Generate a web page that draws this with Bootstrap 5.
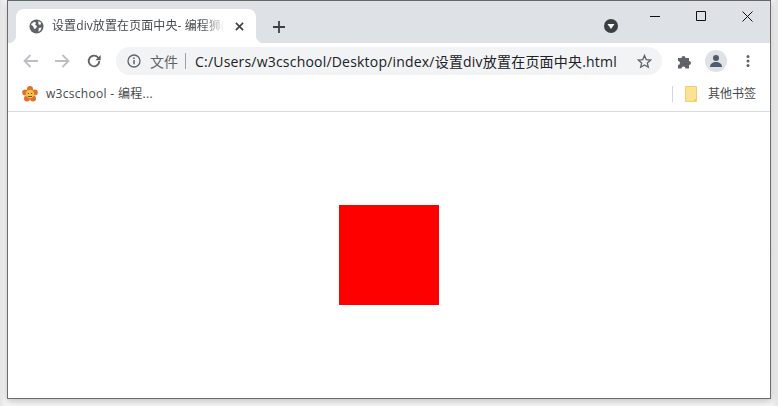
<!DOCTYPE html>
<html lang="zh-CN">
<head>
    <meta charset="UTF-8">
    <title>设置div放置在页面中央</title>
    <link href="https://cdn.jsdelivr.net/npm/bootstrap@5.3.3/dist/css/bootstrap.min.css" rel="stylesheet">
    <style>
        html, body { height: 100%; background: #fff; overflow: hidden; }
        body { font-family: "Open Sans", "Noto Sans CJK SC", sans-serif; }
        .shot { width: 778px; height: 406px; padding: 0 7px 7px 7px; background: linear-gradient(90deg, #e4e4e4, #f6f6f6 5px, #f6f6f6 771px, #e4e4e4); }
        .win { height: 399px; border: 1px solid #6b6b6b; border-top-color: #666; background: #fff; box-shadow: 0 2px 7px rgba(0,0,0,.22); }
        .titlebar { height: 42px; background: #dee1e6; padding: 8px 0 0 8px; }
        .tab-item { position: relative; width: 240px; height: 34px; background: #fff; border-radius: 8px 8px 0 0; padding: 0 12px 0 13px; font-size: 12px; color: #45484c; }
        .tab-item::before, .tab-item::after { content: ""; position: absolute; bottom: 0; width: 8px; height: 8px; background: radial-gradient(circle at 0 0, transparent 8px, #fff 8.5px); }
        .tab-item::before { left: -8px; }
        .tab-item::after { right: -8px; background: radial-gradient(circle at 100% 0, transparent 8px, #fff 8.5px); }
        .tab-text { margin-left: 8px; letter-spacing: .1px; white-space: nowrap; -webkit-mask-image: linear-gradient(90deg, #000 150px, transparent 173px); mask-image: linear-gradient(90deg, #000 150px, transparent 173px); }
        .newtab { margin-left: 17px; margin-top: 12px; }
        .media-btn { margin-left: 319px; margin-top: 10px; }
        .winctl { width: 46px; height: 30px; margin-top: -8px; }
        .winctls { margin-left: 14px; }
        .toolbar { height: 36px; padding-left: 15px; }
        .nav-gap { margin-right: 16px; }
        .back-gap { margin-right: 15px; }
        .reload { margin-right: 8px; margin-left: 1px; }
        .omni { width: 546px; height: 28px; margin-left: 7px; background: #f1f3f4; border-radius: 14px; padding: 0 11px; font-size: 14px; color: #202124; white-space: nowrap; }
        .omni-file { margin-left: 9px; font-size: 14px; color: #5f6368; }
        .omni-sep { width: 1px; height: 16px; background: #9aa0a6; margin: 0 9px 0 7px; }
        .omni-url { letter-spacing: .2px; }
        .star { margin-left: auto; margin-right: -1px; }
        .ext { margin-left: 15px; }
        .avatar { width: 22px; height: 22px; margin-left: 12px; border-radius: 50%; background: #dee1e6; }
        .dots { margin-left: 19px; }
        .bookmarks { height: 33px; padding: 0 14px 3px 14px; border-bottom: 1px solid #d9dadc; font-size: 12px; color: #45484c; }
        .bm-first { margin-left: 8px; letter-spacing: .3px; }
        .bm-sep { width: 1px; height: 16px; background: #d3d5d8; margin-right: 12px; }
        .bm-other { margin-left: 11px; }
        .page-area { height: 286px; }
        .redbox { width: 100px; height: 100px; background: #f00; }
        svg { display: block; flex-shrink: 0; }
    </style>
</head>
<body>
<div class="shot">
    <div class="win">
        <!-- title bar -->
        <div class="titlebar d-flex align-items-start">
            <div class="tab-item d-flex align-items-center">
                <svg width="15" height="15" viewBox="0 0 16 16"><circle cx="8" cy="8" r="7.5" fill="#5f6368"/><path d="M2 5.5 5.5 3l2 1-1 2 2 1.5-1 2.5-2 .5-1-2.500zM10 2l3 2-1 2.500-2-1zM10.500 9.500l3-.5-1.500 3.500-2 1z" fill="#fff"/></svg>
                <span class="tab-text">设置div放置在页面中央- 编程狮(</span>
                <svg class="ms-auto" width="9" height="9" viewBox="0 0 10 10"><path d="M1 1l8 8M9 1l-8 8" stroke="#3c4043" stroke-width="1.800"/></svg>
            </div>
            <svg class="newtab" width="12" height="12" viewBox="0 0 12 12"><path d="M6 0v12M0 6h12" stroke="#3c4043" stroke-width="1.800"/></svg>
            <svg class="media-btn" width="14" height="14" viewBox="0 0 14 14"><circle cx="7" cy="7" r="7" fill="#3c4043"/><path d="M3.500 5h7L7 10z" fill="#fff"/></svg>
            <div class="winctls d-flex">
                <div class="winctl d-flex align-items-center justify-content-center"><svg width="10" height="1" viewBox="0 0 10 1"><path d="M0 .5h10" stroke="#111"/></svg></div>
                <div class="winctl d-flex align-items-center justify-content-center"><svg width="10" height="10" viewBox="0 0 10 10"><path d="M.5.5h9v9h-9z" fill="none" stroke="#111"/></svg></div>
                <div class="winctl d-flex align-items-center justify-content-center"><svg width="11" height="11" viewBox="0 0 11 11"><path d="M.5.5l10 10M10.500.5l-10 10" stroke="#111"/></svg></div>
            </div>
        </div>

        <!-- toolbar -->
        <div class="toolbar d-flex align-items-center">
            <svg class="back-gap" width="16" height="14" viewBox="0 0 16 14"><path d="M15 7H2M7.500 1 1.500 7l6 6" fill="none" stroke="#bcbfc3" stroke-width="1.800"/></svg>
            <svg class="nav-gap" width="16" height="14" viewBox="0 0 16 14"><path d="M1 7h13M8.500 1l6 6-6 6" fill="none" stroke="#bcbfc3" stroke-width="1.800"/></svg>
            <svg class="reload" width="14" height="14" viewBox="0 0 14 14"><path d="M11.500 4.200A5.300 5.300 0 1 0 12.300 7" fill="none" stroke="#5f6368" stroke-width="1.800"/><path d="M13.700 1v5.300h-5.300z" fill="#5f6368"/></svg>
            <div class="omni d-flex align-items-center">
                <svg width="14" height="14" viewBox="0 0 14 14"><circle cx="7" cy="7" r="6" fill="none" stroke="#5f6368" stroke-width="1.300"/><path d="M7 6v4.200M7 3.600v1.400" stroke="#5f6368" stroke-width="1.500"/></svg>
                <span class="omni-file">文件</span>
                <span class="omni-sep"></span>
                <span class="omni-url">C:/Users/w3cschool/Desktop/index/设置div放置在页面中央.html</span>
                <svg class="star" width="15" height="15" viewBox="0 0 15 15"><path d="M7.500 1.500 9.200 5.600l4.400.4-3.300 2.900 1 4.300-3.800-2.300-3.800 2.300 1-4.300L1.400 6l4.400-.4z" fill="none" stroke="#5f6368" stroke-width="1.300"/></svg>
            </div>
            <svg class="ext" width="16" height="15" viewBox="0 0 16 15"><path d="M1 4h3.500a2 2 0 0 1 4 0H12v3a2 2 0 0 1 0 4v3.500H8.500a2 2 0 0 0-4 0H1v-3.500a2 2 0 0 0 0-4z" fill="#5f6368"/></svg>
            <div class="avatar d-flex align-items-center justify-content-center">
                <svg width="14" height="14" viewBox="0 0 14 14"><circle cx="7" cy="4" r="3" fill="#4e5a70"/><path d="M1 13c0-3.500 3-5 6-5s6 1.500 6 5z" fill="#4e5a70"/></svg>
            </div>
            <svg class="dots" width="4" height="14" viewBox="0 0 4 14"><circle cx="2" cy="2.500" r="1.500" fill="#5f6368"/><circle cx="2" cy="7" r="1.500" fill="#5f6368"/><circle cx="2" cy="11.500" r="1.500" fill="#5f6368"/></svg>
        </div>

        <!-- bookmarks bar -->
        <div class="bookmarks d-flex align-items-center">
            <svg width="16" height="16" viewBox="0 0 16 16">
                <g fill="#e2702a"><circle cx="8" cy="3" r="3"/><circle cx="3.200" cy="6.500" r="3"/><circle cx="12.800" cy="6.500" r="3"/><circle cx="5" cy="12.500" r="3"/><circle cx="11" cy="12.500" r="3"/></g>
                <circle cx="8" cy="8" r="4.300" fill="#f2c14a"/>
                <path d="M5.800 7.500h1.200M9 7.500h1.200M6 10.500h4" stroke="#7a4a12" stroke-width="1.100"/>
            </svg>
            <span class="bm-first">w3cschool - 编程...</span>
            <span class="bm-sep ms-auto"></span>
            <svg width="12" height="16" viewBox="0 0 12 16"><path d="M.5.500h11v15H.500z" fill="#fde293" stroke="#f0cf6c"/><path d="M9 13h2.500v2.500H9z" fill="#f0cf6c"/></svg>
            <span class="bm-other">其他书签</span>
        </div>

        <!-- page content -->
        <div class="page-area d-flex align-items-center justify-content-center">
            <div class="redbox"></div>
        </div>
    </div>
</div>
<script src="https://cdn.jsdelivr.net/npm/bootstrap@5.3.3/dist/js/bootstrap.bundle.min.js"></script>
</body>
</html>
